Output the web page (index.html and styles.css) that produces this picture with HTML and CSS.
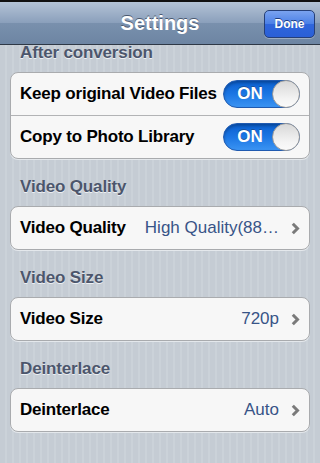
FILE: index.html
```html
<!DOCTYPE html>
<html>
<head>
<meta charset="utf-8">
<link rel="stylesheet" href="styles.css">
</head>
<body>
<div class="screen">
  <div class="navbar">
    <div class="title">Settings</div>
    <div class="done">Done</div>
  </div>
  <div class="content">
    <div class="header">After conversion</div>
    <div class="group">
      <div class="row">
        <span class="label">Keep original Video Files</span>
        <span class="switch"><span class="on">ON</span><span class="knob"></span></span>
      </div>
      <div class="row">
        <span class="label">Copy to Photo Library</span>
        <span class="switch"><span class="on">ON</span><span class="knob"></span></span>
      </div>
    </div>

    <div class="header">Video Quality</div>
    <div class="group">
      <div class="row">
        <span class="label">Video Quality</span>
        <span class="value">High Quality(88…</span>
        <svg class="chev" width="9" height="13" viewBox="0 0 9 13"><path d="M1.8 1.8 L6.5 6.5 L1.8 11.2" fill="none" stroke="#7a7a7a" stroke-width="3"/></svg>
      </div>
    </div>

    <div class="header">Video Size</div>
    <div class="group">
      <div class="row">
        <span class="label">Video Size</span>
        <span class="value">720p</span>
        <svg class="chev" width="9" height="13" viewBox="0 0 9 13"><path d="M1.8 1.8 L6.5 6.5 L1.8 11.2" fill="none" stroke="#7a7a7a" stroke-width="3"/></svg>
      </div>
    </div>

    <div class="header">Deinterlace</div>
    <div class="group">
      <div class="row">
        <span class="label">Deinterlace</span>
        <span class="value">Auto</span>
        <svg class="chev" width="9" height="13" viewBox="0 0 9 13"><path d="M1.8 1.8 L6.5 6.5 L1.8 11.2" fill="none" stroke="#7a7a7a" stroke-width="3"/></svg>
      </div>
    </div>
  </div>
</div>
</body>
</html>
```
FILE: styles.css
```css
html, body {
  margin: 0;
  padding: 0;
}
body {
  width: 320px;
  height: 463px;
  overflow: hidden;
  font-family: "Liberation Sans", Arial, sans-serif;
  background: repeating-linear-gradient(90deg, #c5ccd4 0px, #c5ccd4 5px, #cbd2d9 5px, #cbd2d9 7px);
}
.screen {
  display: flex;
  flex-direction: column;
  height: 463px;
}
.navbar {
  height: 42px;
  border-top: 2px solid #111;
  border-bottom: 1px solid #2e3846;
  background: linear-gradient(#b4c3d6, #8a9fbb 50%, #7990ad 51%, #6d85a3);
  display: flex;
  align-items: center;
  justify-content: center;
  position: relative;
}
.title {
  color: #fff;
  font-size: 20px;
  font-weight: bold;
  text-shadow: 0 -1px 0 #4a5970;
}
.done {
  position: absolute;
  right: 5px;
  top: 8px;
  width: 49px;
  height: 26px;
  border: 1px solid #253f78;
  border-radius: 5px;
  background: linear-gradient(#7aa3f0, #4a7fe6 50%, #2f66dc 51%, #2a5fd6);
  color: #fff;
  font-size: 12px;
  font-weight: bold;
  display: flex;
  align-items: center;
  justify-content: center;
  text-shadow: 0 -1px 0 #1d3d80;
  box-shadow: 0 1px 0 rgba(255,255,255,0.3);
}
.content {
  display: flex;
  flex-direction: column;
  padding: 0 10px;
}
.header {
  font-size: 17px;
  font-weight: bold;
  line-height: 16px;
  height: 16px;
  color: #4c566c;
  text-shadow: 0 1px 0 #eef1f4;
  padding-left: 10px;
  margin-bottom: 11px;
  letter-spacing: -0.15px;
}
.group {
  background: #f7f7f7;
  border: 1px solid #a9abae;
  border-radius: 8px;
  margin-bottom: 20px;
  box-shadow: 0 1px 0 #e4e8ec;
}
.row {
  height: 42px;
  display: flex;
  align-items: center;
  padding: 0 10px 0 9px;
}
.row + .row {
  border-top: 1px solid #b2b3b5;
}
.label {
  font-size: 17px;
  font-weight: bold;
  color: #000;
  flex: 1;
  white-space: nowrap;
  letter-spacing: -0.2px;
}
.value {
  font-size: 17px;
  color: #385487;
  white-space: nowrap;
  margin-right: 12px;
}
.chev {
  display: block;
  margin-right: -1px;
}
.switch {
  width: 77px;
  height: 28px;
  box-sizing: border-box;
  border-radius: 14px;
  background: linear-gradient(#0a5fcf, #1b76e4 50%, #3a93f2);
  border: 1px solid #1f5ab0;
  display: flex;
  align-items: center;
  position: relative;
  box-shadow: inset 0 2px 3px rgba(0,0,0,0.25);
  margin-right: -1px;
}
.on {
  color: #fff;
  font-size: 17px;
  font-weight: bold;
  width: 52px;
  text-align: center;
  text-shadow: 0 -1px 0 #1a4f9a;
}
.knob {
  position: absolute;
  right: -1px;
  top: -1px;
  width: 28px;
  height: 28px;
  box-sizing: border-box;
  border-radius: 50%;
  border: 1px solid #9a9a9a;
  background: linear-gradient(#d8d8d8, #f4f4f4 70%, #fafafa);
}
```
